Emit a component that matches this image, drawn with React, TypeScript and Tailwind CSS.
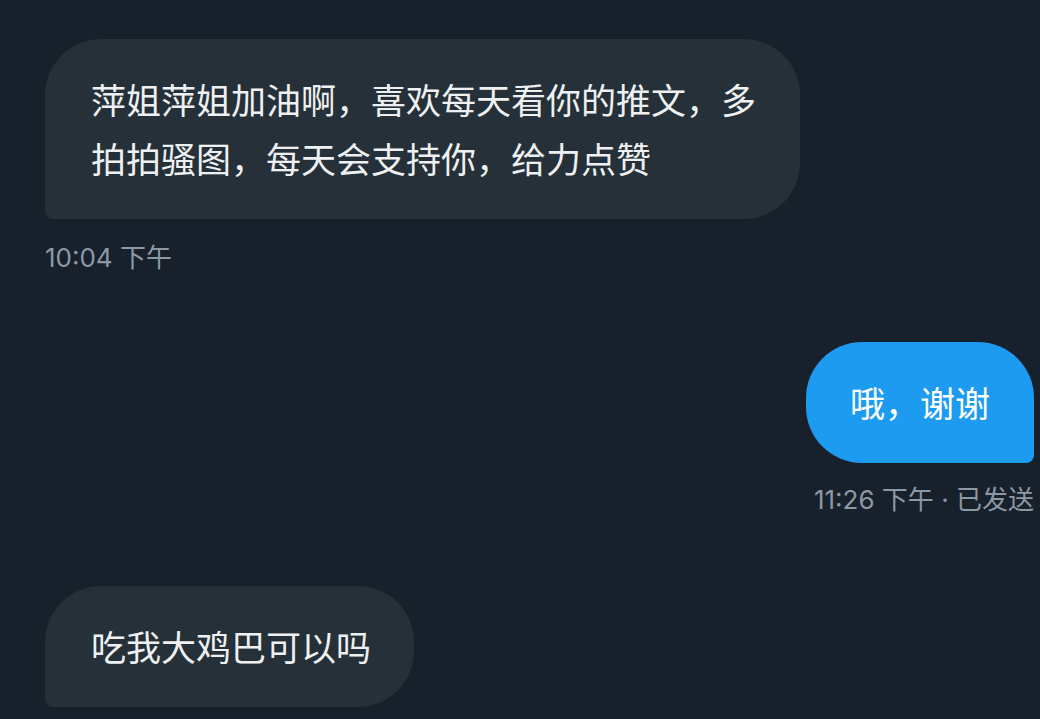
const font = "font-['Inter','Noto_Sans_CJK_SC',sans-serif]"

function Incoming({ text }: { text: string }) {
    return (
        <div className="flex justify-start">
            <div className="max-w-[755px] bg-[#253039] text-[#eef0f1] text-[35px] leading-[59px] pl-[46px] pr-[43px] pt-[33px] pb-[29px] rounded-[56px] rounded-bl-[8px]">
                {text}
            </div>
        </div>
    )
}

function Outgoing({ text }: { text: string }) {
    return (
        <div className="flex justify-end">
            <div className="bg-[#1d9bf0] text-white text-[35px] leading-[59px] px-[44px] pt-[33px] pb-[29px] rounded-[56px] rounded-br-[8px]">
                {text}
            </div>
        </div>
    )
}

export default function App() {
    return (
        <div className={`min-h-[719px] w-[1040px] bg-[#18202b] pl-[45px] pr-[6px] pt-[39px] overflow-hidden ${font}`}>
            <Incoming text="萍姐萍姐加油啊，喜欢每天看你的推文，多拍拍骚图，每天会支持你，给力点赞" />
            <div className="mt-[24px] text-[26px] leading-[30px] text-[#8b98a5]">10:04 下午</div>

            <div className="mt-[69px]">
                <Outgoing text="哦，谢谢" />
            </div>
            <div className="mt-[22px] text-right text-[26px] leading-[30px] text-[#8b98a5]">11:26 下午 · 已发送</div>

            <div className="mt-[71px]">
                <Incoming text="吃我大鸡巴可以吗" />
            </div>
        </div>
    )
}
